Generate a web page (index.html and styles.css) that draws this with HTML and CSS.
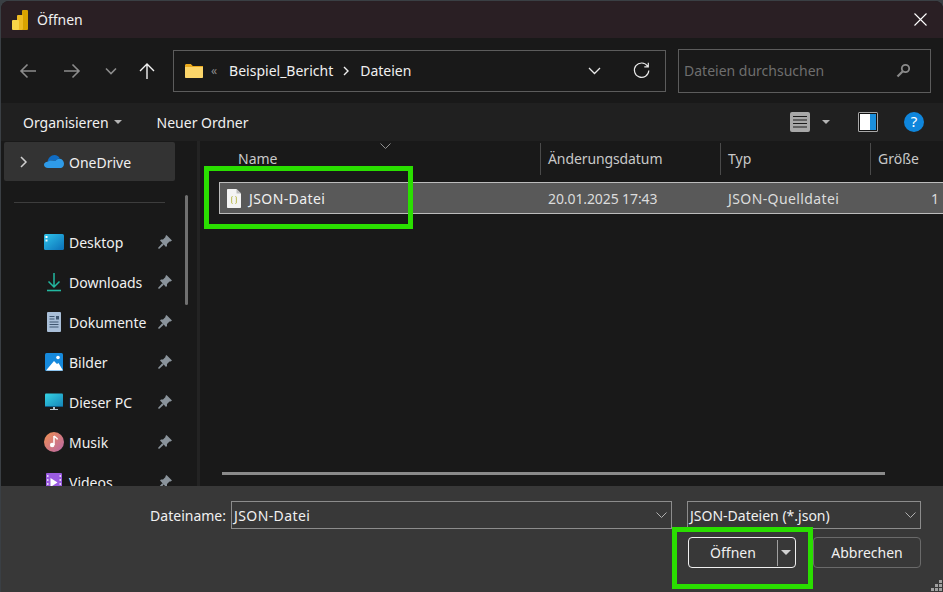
FILE: index.html
```html
<!DOCTYPE html>
<html lang="de">
<head>
    <meta charset="UTF-8">
    <title>Öffnen</title>
    <link rel="stylesheet" href="styles.css">
</head>
<body>

<div class="dialog">
    <div class="titlebar">
        <svg class="app-icon" width="16" height="20" viewBox="0 0 16 20">
            <rect x="10" y="0" width="6" height="20" rx="1" fill="#d9a300"/>
            <rect x="5" y="5" width="6" height="15" rx="1" fill="#eebb22"/>
            <rect x="0" y="10" width="7" height="10" rx="1" fill="#f8d648"/>
        </svg>
        <span class="title">Öffnen</span>
        <svg class="close" width="13" height="13" viewBox="0 0 13 13"><path d="M.5.5l12 12M12.5.5l-12 12" stroke="#fff" stroke-width="1.1"/></svg>
    </div>

    <div class="addressrow">
        <svg class="nav-btn back" width="18" height="16" viewBox="0 0 18 16"><path d="M17 8H2M8.5 1.5L2 8l6.5 6.5" fill="none" stroke="#8c8c8c" stroke-width="1.6"/></svg>
        <svg class="nav-btn forward" width="18" height="16" viewBox="0 0 18 16"><path d="M1 8h15M9.5 1.5L16 8l-6.5 6.5" fill="none" stroke="#8c8c8c" stroke-width="1.6"/></svg>
        <svg class="nav-btn recent" width="12" height="8" viewBox="0 0 12 8"><path d="M1 1.5l5 5 5-5" fill="none" stroke="#8c8c8c" stroke-width="1.6"/></svg>
        <svg class="nav-btn up" width="16" height="18" viewBox="0 0 16 18"><path d="M8 17V2M1 9l7-7 7 7" fill="none" stroke="#f2f2f2" stroke-width="1.4"/></svg>

        <div class="address">
            <svg width="18" height="14" viewBox="0 0 18 14">
                <path d="M0 1.5C0 .7.6 0 1.4 0h4.4l2 2H18v2H0z" fill="#eaa91d"/>
                <path d="M0 3h18v10c0 .6-.5 1-1 1H1c-.5 0-1-.4-1-1z" fill="#fbd56a"/>
            </svg>
            <span class="crumb-more">«</span>
            <span class="crumb">Beispiel_Bericht</span>
            <svg class="crumb-sep" width="7" height="10" viewBox="0 0 7 10"><path d="M1 1l4 4-4 4" fill="none" stroke="#f0f0f0" stroke-width="1.4"/></svg>
            <span class="crumb">Dateien</span>
            <svg class="addr-drop" width="13" height="8" viewBox="0 0 13 8"><path d="M1 1l5.5 5.5L12 1" fill="none" stroke="#e8e8e8" stroke-width="1.3"/></svg>
            <svg class="refresh" width="17" height="17" viewBox="0 0 17 17"><path d="M14.6 4.2A7.2 7.2 0 1 0 15.8 8.500M15.300 .8v4h-4" fill="none" stroke="#e8e8e8" stroke-width="1.200"/></svg>
        </div>

        <div class="search">
            <span>Dateien durchsuchen</span>
            <svg width="15" height="15" viewBox="0 0 15 15"><circle cx="9.500" cy="5.500" r="3.700" fill="none" stroke="#8a8a8a" stroke-width="1.800"/><path d="M6.800 8.300L1.500 13.500" stroke="#8a8a8a" stroke-width="2.200"/></svg>
        </div>
    </div>

    <div class="toolbar">
        <span class="tool">Organisieren</span>
        <span class="caret"></span>
        <span class="tool new-folder">Neuer Ordner</span>

        <svg class="view-icon" width="20" height="20" viewBox="0 0 20 20">
            <rect width="20" height="20" rx="2" fill="#a8a8a8"/>
            <path d="M3 4.500h14M3 8h14M3 11.500h14M3 15h14" stroke="#1c1c1c" stroke-width="1.200"/>
        </svg>
        <span class="caret view-caret"></span>
        <svg class="pane-icon" width="20" height="20" viewBox="0 0 20 20">
            <rect width="20" height="20" rx="1.500" fill="#a8a8a8"/>
            <rect x="1" y="1" width="18" height="18" fill="#111"/>
            <rect x="2" y="2" width="10" height="16" fill="#fff"/>
            <rect x="12" y="2" width="6" height="16" fill="#1b8fdc"/>
        </svg>
        <svg class="help-icon" width="20" height="20" viewBox="0 0 20 20">
            <circle cx="10" cy="10" r="10" fill="#0f86dc"/>
            <text x="10" y="15" text-anchor="middle" class="help-mark">?</text>
        </svg>
    </div>

    <div class="main">
        <aside class="sidebar">
            <div class="nav-selected">
                <svg width="8" height="12" viewBox="0 0 8 12"><path d="M1 1l5 5-5 5" fill="none" stroke="#cfcfcf" stroke-width="1.500"/></svg>
                <svg class="cloud" width="20" height="13" viewBox="0 0 20 13">
                    <path d="M3.500 7C4 3 7 0 10.500 0c2.400 0 4.400 1.300 5.300 3.500C14 3.700 12.500 4.500 11.500 6 9 5 5.500 5.500 3.500 7z" fill="#0f6cc4"/>
                    <path d="M4 13c-2.500 0-4-1.500-4-3.200C0 8 1.500 6.700 3.500 6.700c2-1.500 5.500-1.700 8-.7 1-1.500 2.700-2.400 4.500-2.200 2.300.3 4 2.500 4 5 0 2.500-1.500 4.200-3.500 4.200z" fill="#2f9be8"/>
                </svg>
                <span class="nav-selected-label">OneDrive</span>
            </div>
            <div class="nav-separator"></div>
            <ul class="nav-list">
                <li>
                    <svg width="20" height="16" viewBox="0 0 20 16"><defs><linearGradient id="desk" x1="0" y1="0" x2="1" y2="1"><stop offset="0" stop-color="#2fc4ea"/><stop offset="1" stop-color="#0b6fb8"/></linearGradient></defs><rect width="20" height="16" rx="1.500" fill="url(#desk)"/><rect x="1.500" y="2" width="2" height="2" fill="#fff"/><rect x="1.500" y="5.500" width="2" height="2" fill="#e8f8ff"/></svg>
                    <span>Desktop</span><svg class="pin" width="14" height="14"><use href="#pin"/></svg>
                </li>
                <li>
                    <svg width="20" height="20" viewBox="0 0 20 20"><path d="M10 1v14M4.500 9.500L10 15l5.500-5.500" fill="none" stroke="#22b8a0" stroke-width="1.500"/><path d="M3 18.500h14" stroke="#22b8a0" stroke-width="1.600"/></svg>
                    <span>Downloads</span><svg class="pin" width="14" height="14"><use href="#pin"/></svg>
                </li>
                <li>
                    <svg width="20" height="20" viewBox="0 0 20 20"><rect x="3" width="14" height="20" rx="1" fill="#a9bfd8"/><path d="M5.500 4.500h5M5.500 7h5M5.500 10h9M5.500 12.500h9M5.500 15h9" stroke="#3f5670" stroke-width="1"/><rect x="12" y="4" width="3" height="3.500" fill="#3f5670"/></svg>
                    <span>Dokumente</span><svg class="pin" width="14" height="14"><use href="#pin"/></svg>
                </li>
                <li>
                    <svg width="20" height="18" viewBox="0 0 20 18"><rect x="1" width="18" height="18" rx="1.500" fill="#1689dc"/><path d="M2 17.500L10 8l3 3 1.500-1L19 17.500z" fill="#fff"/><circle cx="14" cy="4.500" r="1.800" fill="#fff"/></svg>
                    <span>Bilder</span><svg class="pin" width="14" height="14"><use href="#pin"/></svg>
                </li>
                <li>
                    <svg width="20" height="18" viewBox="0 0 20 18"><defs><linearGradient id="pc" x1="0" y1="0" x2="1" y2="1"><stop offset="0" stop-color="#36d3e4"/><stop offset="1" stop-color="#1585b8"/></linearGradient></defs><rect x="1" y="0.500" width="18" height="13" rx="1" fill="url(#pc)"/><path d="M1 13h18v1H1z" fill="#0d5c88"/><rect x="9" y="14" width="2" height="2" fill="#b8c4cc"/><rect x="6" y="16" width="8" height="1" fill="#b8c4cc"/></svg>
                    <span>Dieser PC</span><svg class="pin" width="14" height="14"><use href="#pin"/></svg>
                </li>
                <li>
                    <svg width="20" height="20" viewBox="0 0 20 20"><defs><linearGradient id="mus" x1="0" y1="0" x2="1" y2="1"><stop offset="0" stop-color="#f09050"/><stop offset="1" stop-color="#b866a8"/></linearGradient></defs><circle cx="10" cy="10" r="10" fill="url(#mus)"/><path d="M10 4v9" stroke="#fff" stroke-width="1.500"/><circle cx="8.200" cy="13" r="2.300" fill="#fff"/><path d="M10 4c1 1.500 3 1.500 3.500 3.500" fill="none" stroke="#fff" stroke-width="1.500"/></svg>
                    <span>Musik</span><svg class="pin" width="14" height="14"><use href="#pin"/></svg>
                </li>
                <li>
                    <svg width="20" height="18" viewBox="0 0 20 18"><rect x="2" width="16" height="18" rx="1" fill="#9a5be0"/><path d="M6.500 5v9l7-4.500z" fill="#fff"/><path d="M3 2h1.500v2H3zM3 6h1.500v2H3zM3 10h1.500v2H3zM15.500 2H17v2h-1.500zM15.500 6H17v2h-1.500zM15.500 10H17v2h-1.500z" fill="#e4d2f8"/></svg>
                    <span>Videos</span><svg class="pin" width="14" height="14"><use href="#pin"/></svg>
                </li>
            </ul>
            <div class="nav-scrollbar"></div>
        </aside>

        <section class="files">
            <svg class="sort-arrow" width="11" height="6" viewBox="0 0 11 6"><path d="M.5.500l5 5 5-5" fill="none" stroke="#8f8f8f"/></svg>
            <div class="file-head">
                <div class="col col-name">Name</div>
                <div class="col col-date">Änderungsdatum</div>
                <div class="col col-type">Typ</div>
                <div class="col col-size">Größe</div>
            </div>
            <div class="file-row">
                <div class="col col-name">
                    <svg width="14" height="19" viewBox="0 0 14 19">
                        <path d="M0 1c0-.6.4-1 1-1h8.500L14 4.500V18c0 .6-.4 1-1 1H1c-.6 0-1-.4-1-1z" fill="#f4f4f4"/>
                        <path d="M9.500 0v4.500H14z" fill="#bdbdbd"/>
                        <path d="M5.500 7.500c-1.200 0-.8 1.500-.8 2.500s-.7 1-.7 1 .7 0 .7 1-.4 2.500.8 2.500M8.500 7.500c1.200 0 .8 1.500.8 2.500s.7 1 .7 1-.7 0-.7 1 .4 2.500-.8 2.500" fill="none" stroke="#b5b53a" stroke-width="1"/>
                    </svg>
                    <span class="json-text">JSON-Datei</span>
                </div>
                <div class="col col-date">20.01.2025 17:43</div>
                <div class="col col-type json-text">JSON-Quelldatei</div>
                <div class="col col-size">1</div>
            </div>
            <div class="h-scrollbar"></div>
        </section>
    </div>

    <div class="footer">
        <div class="name-row">
            <label class="name-label">Dateiname:</label>
            <div class="combo name-combo">
                <span class="json-text">JSON-Datei</span>
                <svg width="11" height="6" viewBox="0 0 11 6"><path d="M.5.500l5 5 5-5" fill="none" stroke="#b0b0b0"/></svg>
            </div>
            <div class="combo type-combo">
                <span>JSON-Dateien (*.json)</span>
                <svg width="11" height="6" viewBox="0 0 11 6"><path d="M.5.500l5 5 5-5" fill="none" stroke="#b0b0b0"/></svg>
            </div>
        </div>
        <div class="button-row">
            <div class="btn btn-open">
                <span class="btn-open-label">Öffnen</span>
                <span class="btn-split"></span>
                <span class="btn-caret"></span>
            </div>
            <div class="btn btn-cancel">Abbrechen</div>
        </div>
        <svg class="grip" width="11" height="11" viewBox="0 0 11 11"><path d="M8 0h3v3H8zM4 4h3v3H4zM8 4h3v3H8zM0 8h3v3H0zM4 8h3v3H4zM8 8h3v3H8z" fill="#a0a0a0"/></svg>
    </div>

    <div class="mark mark-file"></div>
    <div class="mark mark-open"></div>
</div>

<svg class="defs" width="0" height="0">
    <symbol id="pin" viewBox="0 0 14 14">
        <path d="M8.500 0L14 5.500l-1.500 1-1 0-2.500 2.500 0 2-1 1L2 5.500l1-1 2 0L7.500 2l0-1zM4.200 8.300l1.500 1.500L1 14 0 13z" fill="#8a939b"/>
    </symbol>
</svg>

</body>
</html>
```

FILE: styles.css
```css
html, body {
    margin: 0;
    height: 100%;
    overflow: hidden;
    background: #3a3f44;
}
body {
    font-family: "Noto Sans", sans-serif;
    font-size: 14px;
    color: #f0f0f0;
}
.defs {
    position: absolute;
}
.dialog {
    position: relative;
    width: 942px;
    height: 591px;
    margin: 1px 0 0 1px;
    border-radius: 8px 8px 0 0;
    overflow: hidden;
    display: flex;
    flex-direction: column;
    background: #191919;
}
.titlebar {
    height: 37px;
    flex: none;
    display: flex;
    align-items: center;
    padding: 0 16px 0 11px;
    background: #2a1f24;
}
.app-icon {
    margin-right: 9px;
}
.title {
    flex: 1;
    font-size: 14px;
}
.addressrow {
    height: 65px;
    flex: none;
    display: flex;
    align-items: center;
    background: #191919;
    position: relative;
}
.nav-btn {
    flex: none;
}
.nav-btn.back {
    margin-left: 18px;
}
.nav-btn.forward {
    margin-left: 26px;
}
.nav-btn.recent {
    margin-left: 24px;
}
.nav-btn.up {
    margin-left: 22px;
    margin-right: 18px;
}
.address {
    width: 493px;
    height: 42px;
    box-sizing: border-box;
    border: 1px solid #5c5c5c;
    display: flex;
    align-items: center;
    padding: 0 15px 0 11px;
}
.crumb-more {
    color: #8c8c8c;
    margin: 0 12px 0 8px;
    font-size: 12px;
}
.crumb-sep {
    margin: 0 10px 0 10px;
}
.addr-drop {
    margin-left: auto;
    margin-right: 32px;
}
.search {
    width: 253px;
    height: 44px;
    margin-left: 12px;
    box-sizing: border-box;
    border: 1px solid #5c5c5c;
    display: flex;
    align-items: center;
    justify-content: space-between;
    padding: 0 19px 0 5px;
    color: #6e6e6e;
}
.toolbar {
    height: 38px;
    flex: none;
    display: flex;
    align-items: center;
    background: #202020;
    padding-left: 22px;
}
.caret {
    width: 0;
    height: 0;
    border-left: 4px solid transparent;
    border-right: 4px solid transparent;
    border-top: 4px solid #b4b4b4;
    margin-left: 5px;
}
.new-folder {
    margin-left: 35px;
}
.view-icon {
    margin-left: auto;
}
.view-caret {
    margin-left: 12px;
}
.pane-icon {
    margin-left: 28px;
}
.help-icon {
    margin-left: 26px;
    margin-right: 19px;
}
.help-mark {
    font-family: "Noto Sans", sans-serif;
    font-size: 15px;
    fill: #fff;
}
.main {
    flex: 1;
    display: flex;
    min-height: 0;
    background: #191919;
}
.sidebar {
    position: relative;
    width: 199px;
    flex: none;
    overflow: hidden;
    border-right: 3px solid #232323;
    padding-top: 1px;
    box-sizing: border-box;
}
.nav-selected {
    width: 171px;
    height: 39px;
    margin-left: 3px;
    box-sizing: border-box;
    background: #333;
    border-radius: 2px;
    display: flex;
    align-items: center;
    padding-left: 16px;
}
.nav-selected-label {
    position: relative;
    top: 1px;
}
.cloud {
    margin: 0 5px 0 16px;
}
.nav-separator {
    height: 1px;
    width: 151px;
    margin: 21px 0 19px 13px;
    background: #3d3d3d;
}
.nav-list {
    list-style: none;
    margin: 0;
    padding: 0;
}
.nav-list li {
    height: 40px;
    display: flex;
    align-items: center;
    padding-left: 43px;
    width: 171px;
    box-sizing: border-box;
}
.nav-list li > svg:first-child {
    width: 20px;
    margin-right: 5px;
    flex: none;
}
.nav-list li span {
    flex: 1;
}
.pin {
    flex: none;
}
.nav-scrollbar {
    position: absolute;
    left: 184px;
    top: 54px;
    width: 3px;
    height: 110px;
    border-radius: 2px;
    background: #707070;
}
.files {
    position: relative;
    flex: 1;
    min-width: 0;
    overflow: hidden;
}
.sort-arrow {
    position: absolute;
    left: 180px;
    top: 2px;
}
.file-head {
    height: 33px;
    margin-top: 1px;
    display: flex;
    align-items: center;
    color: #c8c8c8;
}
.file-head .col {
    height: 32px;
    line-height: 32px;
    border-right: 1px solid #4a4a4a;
}
.col {
    flex: none;
    box-sizing: border-box;
    white-space: nowrap;
}
.col-name {
    width: 341px;
    padding-left: 38px;
}
.col-date {
    width: 180px;
    padding-left: 7px;
    letter-spacing: -0.1px;
}
.col-type {
    width: 150px;
    padding-left: 7px;
}
.col-size {
    padding-left: 7px;
}
.file-head .col-size {
    border-right: 0;
}
.file-row {
    height: 32px;
    margin: 7px 0 0 19px;
    box-sizing: border-box;
    border: 1px solid #bcbcbc;
    border-right: 0;
    background: #595959;
    display: flex;
    align-items: center;
    color: #dcdcdc;
}
.file-row .col-name {
    width: 321px;
    padding-left: 7px;
    display: flex;
    align-items: center;
    gap: 8px;
    color: #f0f0f0;
}
.file-row .col-size {
    width: 74px;
    padding-right: 6px;
    text-align: right;
}
.json-text {
    letter-spacing: 0.4px;
}
.h-scrollbar {
    position: absolute;
    left: 22px;
    top: 331px;
    width: 663px;
    height: 3px;
    background: #8a8a8a;
}
.footer {
    position: relative;
    height: 106px;
    flex: none;
    background: #383838;
    padding-top: 14px;
    box-sizing: border-box;
}
.name-row {
    display: flex;
    align-items: center;
    height: 29px;
}
.name-label {
    width: 230px;
    text-align: right;
    padding: 1px 5px 0 0;
    box-sizing: border-box;
}
.combo {
    height: 28px;
    box-sizing: border-box;
    border: 1px solid #8c8c8c;
    display: flex;
    align-items: center;
    justify-content: space-between;
    padding: 1px 4px 0 2px;
}
.name-combo {
    width: 441px;
}
.type-combo {
    width: 234px;
    margin-left: 15px;
}
.button-row {
    display: flex;
    margin: 8px 0 0 687px;
}
.btn {
    width: 108px;
    height: 31px;
    box-sizing: border-box;
    border-radius: 4px;
    display: flex;
    align-items: center;
    justify-content: center;
}
.btn-open {
    border: 1px solid #f0f0f0;
    justify-content: flex-start;
}
.btn-open-label {
    width: 88px;
    text-align: center;
}
.btn-split {
    width: 1px;
    height: 26px;
    background: #a0a0a0;
}
.btn-caret {
    width: 0;
    height: 0;
    margin-left: 3px;
    border-left: 5px solid transparent;
    border-right: 5px solid transparent;
    border-top: 5px solid #d0d0d0;
}
.btn-cancel {
    margin-left: 17px;
    border: 1px solid #6a6a6a;
}
.grip {
    position: absolute;
    right: 1px;
    bottom: 1px;
}
.mark {
    position: absolute;
    box-sizing: border-box;
    border: 5px solid #2adf00;
}
.mark-file {
    left: 203px;
    top: 165px;
    width: 209px;
    height: 63px;
}
.mark-open {
    left: 671px;
    top: 526px;
    width: 141px;
    height: 62px;
}
```
